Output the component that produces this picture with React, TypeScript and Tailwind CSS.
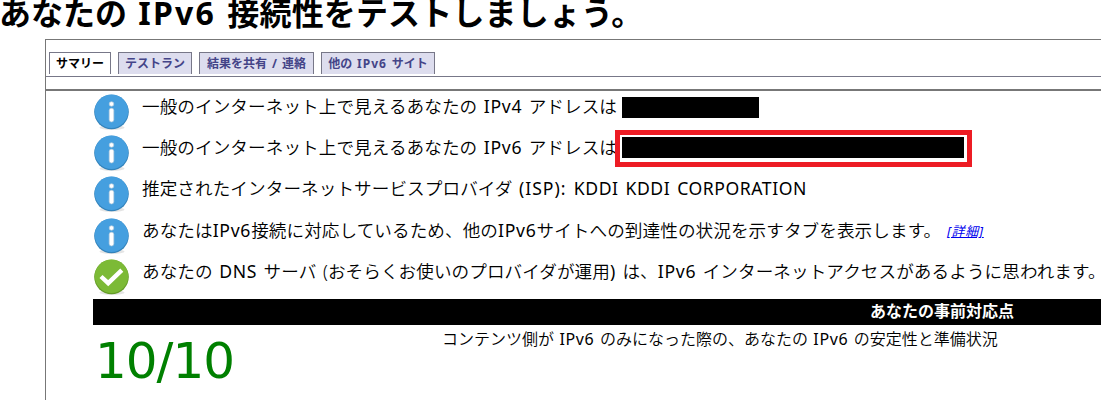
import type { ReactNode } from "react";

function StatusIcon({ kind }: { kind: "info" | "ok" }) {
  const info = kind === "info";
  return (
    <svg className="ml-px block h-[37px] w-[36px] shrink-0" viewBox="0 0 36 37">
      <ellipse cx="18" cy="33.6" rx="12.5" ry="2.4" fill="#e4e4e4" />
      <circle cx="17.5" cy="18" r="17.3" fill={info ? "#3383bb" : "#649c27"} />
      <circle cx="17.5" cy="17.2" r="16.7" fill={info ? "#459fdf" : "#7cba36"} />
      {info ? (
        <g fill="#fff" stroke="#b5cbdc" strokeWidth="0.7">
          <circle cx="17.5" cy="10" r="2.3" />
          <rect x="15.2" y="14.3" width="4.6" height="13.6" rx="2.1" />
        </g>
      ) : (
        <path d="M7 17.5 14.2 24.2 27.8 11.2" fill="none" stroke="#fff" strokeWidth="4.4" />
      )}
    </svg>
  );
}

function Latin({ children }: { children: ReactNode }) {
  return <span className="font-normal tracking-[0.04em]">{children}</span>;
}

function Row({ kind = "info", children }: { kind?: "info" | "ok"; children: ReactNode }) {
  return (
    <div className="flex h-[41.2px] items-start">
      <StatusIcon kind={kind} />
      <div className="-mt-px ml-[12px] flex h-[26px] items-center whitespace-pre text-[17.6px] font-[350] leading-[26px] tracking-[0.08px] [word-spacing:1.8px]">
        {children}
      </div>
    </div>
  );
}

function Tab({ active, className, children }: { active?: boolean; className: string; children: ReactNode }) {
  return (
    <div
      className={`h-[22px] shrink-0 whitespace-pre border border-b-0 border-[#777788] text-center text-[12px] font-bold leading-[22px] [word-spacing:1.8px] ${
        active ? "bg-white text-black" : "bg-[#ddddee] text-[#444488]"
      } ${className}`}
    >
      {children}
    </div>
  );
}

export default function App() {
  return (
    <div className="flex h-[400px] w-[1101px] flex-col overflow-hidden bg-white font-['Noto_Sans','Noto_Sans_CJK_JP',sans-serif] text-black">
      <h1 className="-ml-px h-[39px] shrink-0 whitespace-pre text-[32px] font-bold leading-[26px] [word-spacing:3px]">
        あなたの <span className="tracking-[2.2px]">IPv6</span> <span className="tracking-[0.15px]">接続性をテストしましょう。</span>
      </h1>
      <main className="ml-[45px] grow border-l border-t border-[#777777]">
        <nav className="flex h-[37px] gap-[7px] border-b border-[#777788] pl-[3px] pt-[12px]">
          <Tab active className="w-[62px]">サマリー</Tab>
          <Tab className="w-[74px]">テストラン</Tab>
          <Tab className="w-[115px]">結果を共有 / 連絡</Tab>
          <Tab className="w-[114px]">他の <span className="tracking-[1px]">IPv6</span> サイト</Tab>
        </nav>
        <div className="mt-[12px] h-[2px] bg-[#777777]" />
        <section className="pl-[47px] pt-[3px]">
          <Row>
            <span className="w-[480px]">一般のインターネット上で見えるあなたの <Latin>IPv4</Latin> アドレスは</span>
            <span className="mt-[3px] h-[21px] w-[137px] bg-black" />
          </Row>
          <Row>
            <span className="w-[473px]">一般のインターネット上で見えるあなたの <Latin>IPv6</Latin> アドレスは</span>
            <span className="mt-[2px] flex h-[37px] w-[357px] shrink-0 border-[5px] border-[#ed1c24] pl-[2px] pt-[2px]">
              <span className="h-[21px] w-[342px] bg-black" />
            </span>
          </Row>
          <Row>
            <span>推定されたインターネットサービスプロバイダ <span className="font-normal tracking-[1px]">(ISP): </span><span className="font-normal tracking-[0.55px]">KDDI KDDI CORPORATION</span></span>
          </Row>
          <Row>
            <span className="w-[805px]">あなたは<Latin>IPv6</Latin>接続に対応しているため、他の<Latin>IPv6</Latin>サイトへの到達性の状況を示すタブを表示します。</span>
            <a className="mt-[3px] text-[13px] font-normal italic tracking-[0.8px] text-[#0000ee] underline">[詳細]</a>
          </Row>
          <Row kind="ok">
            <span>あなたの <Latin>DNS</Latin> サーバ (おそらくお使いのプロバイダが運用<Latin>)</Latin> は、<Latin>IPv6</Latin> インターネットアクセスがあるように思われます。</span>
          </Row>
          <div className="-mt-px flex h-[26px] items-center bg-black pb-[2px] pl-[777px] text-[16px] font-bold text-white">あなたの事前対応点</div>
          <div className="flex items-start">
            <div className="w-[349px] shrink-0 pl-[2px] pt-[7px] font-['DejaVu_Sans',sans-serif] text-[50px] leading-[58px] tracking-[-1px] text-[#008000]">10/10</div>
            <div className="whitespace-pre pt-[2px] text-[16px] font-[350] leading-[24px] [word-spacing:1.3px]">
              コンテンツ側が <Latin>IPv6</Latin> のみになった際の、あなたの <Latin>IPv6</Latin> の安定性と準備状況
            </div>
          </div>
        </section>
      </main>
    </div>
  );
}
